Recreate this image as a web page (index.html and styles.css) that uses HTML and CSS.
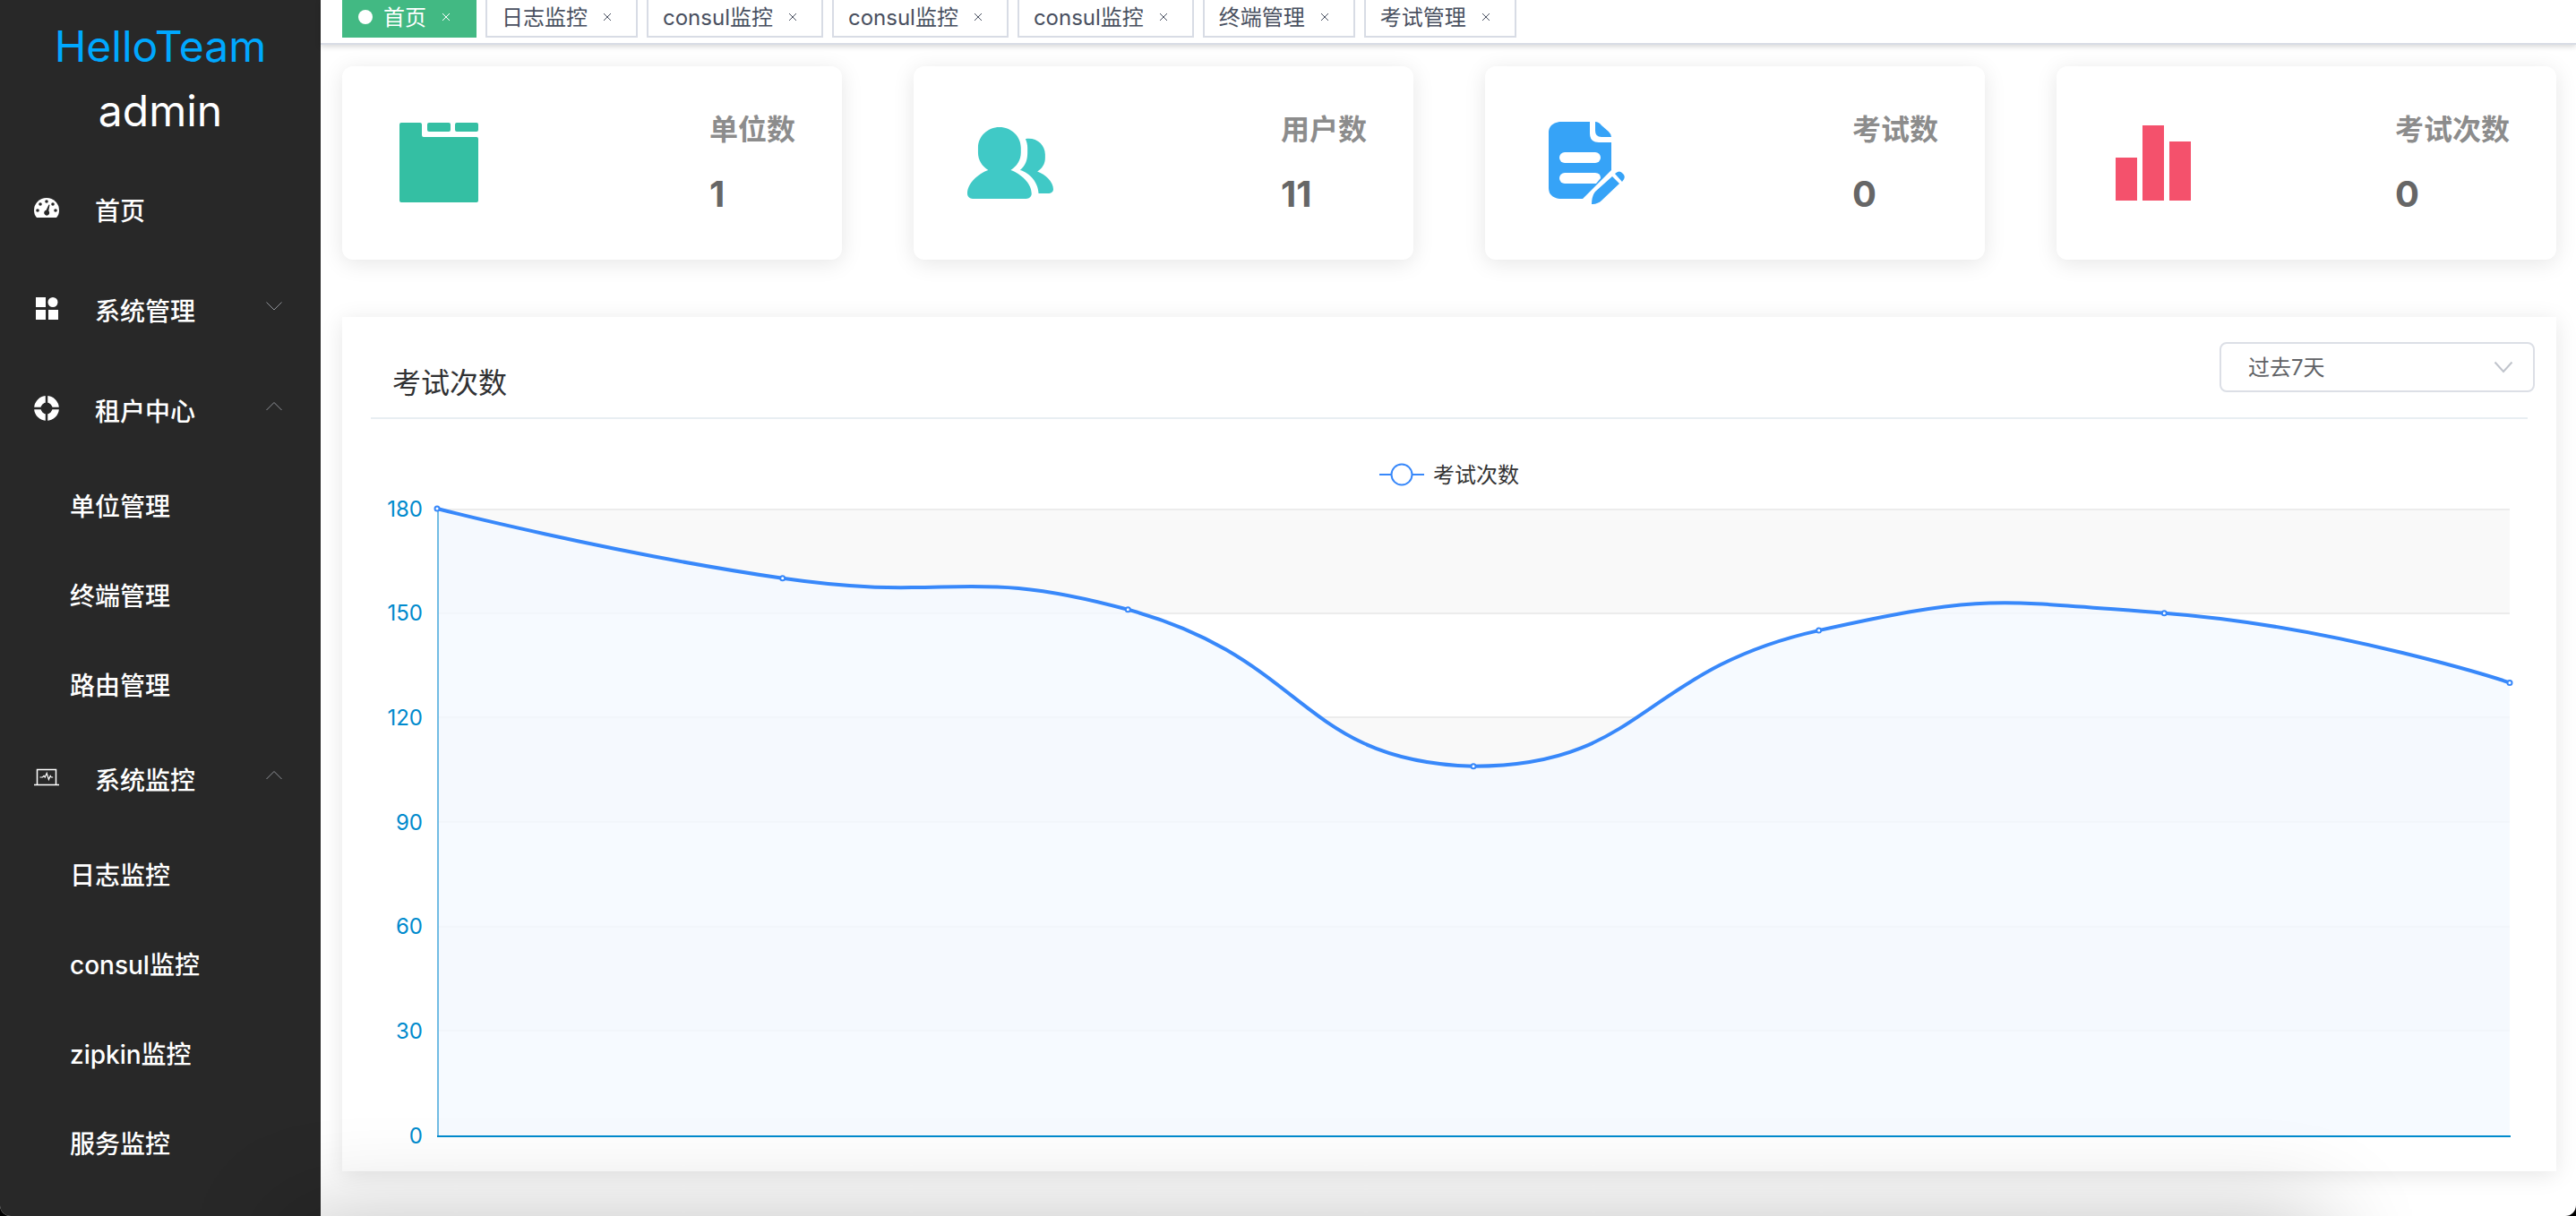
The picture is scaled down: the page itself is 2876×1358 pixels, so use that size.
FILE: index.html
```html
<!DOCTYPE html>
<html lang="zh-CN">
<head>
<meta charset="utf-8">
<meta name="viewport" content="width=device-width, initial-scale=1">
<title>HelloTeam</title>
<link rel="stylesheet" href="styles.css">
</head>
<body>
<div class="app">
  <aside class="sidebar">
    <div class="brand">
      <a class="brand-name" href="#">HelloTeam</a>
      <span class="brand-user">admin</span>
    </div>
    <nav class="menu">
      <a class="menu-item" href="#">
        <svg class="menu-icon" viewBox="0 0 28 28"><path fill="#fff" d="M3 25C1 23 0 20 0 17a14 14 0 0 1 28 0c0 3-1 6-3 8z"/><g fill="#282828"><circle cx="4" cy="17" r="1.8"/><circle cx="7" cy="10" r="1.8"/><circle cx="14" cy="7" r="1.8"/><circle cx="21" cy="10" r="1.8"/><circle cx="24" cy="17" r="1.8"/><path d="M16.500 10.500l1 .3-1.200 6.700a3 3 0 1 1-2.800-.8z"/></g></svg>
        <span>首页</span>
      </a>
      <button class="menu-item" type="button" aria-expanded="false">
        <svg class="menu-icon" viewBox="0 0 28 28"><g fill="#fff"><rect x="2" y="2" width="11" height="11"/><circle cx="21" cy="7.500" r="5.500"/><rect x="2" y="16" width="11" height="11"/><rect x="16" y="16" width="11" height="11"/></g></svg>
        <span>系统管理</span>
        <svg class="chevron" viewBox="0 0 20 12"><path d="M1.500 1.500l8.500 8.500 8.500-8.500"/></svg>
      </button>
      <button class="menu-item" type="button" aria-expanded="true">
        <svg class="menu-icon" viewBox="0 0 28 28"><circle cx="14" cy="14" r="10.200" fill="none" stroke="#fff" stroke-width="7.400"/><path d="M14 0v28M0 14h28" stroke="#282828" stroke-width="2.500"/></svg>
        <span>租户中心</span>
        <svg class="chevron" viewBox="0 0 20 12"><path d="M1.500 10l8.500-8.500 8.500 8.500"/></svg>
      </button>
      <a class="submenu-item" href="#">单位管理</a>
      <a class="submenu-item" href="#">终端管理</a>
      <a class="submenu-item" href="#">路由管理</a>
      <button class="menu-item" type="button" aria-expanded="true">
        <svg class="menu-icon" viewBox="0 0 28 28"><path fill="none" stroke="#fff" stroke-width="1.500" d="M3.500 22V5.500h21V22M0 22.500h28"/><path fill="none" stroke="#fff" stroke-width="1.200" d="M6.500 14h3l1.500-1.500 1.200 1.500 2-4.500 2.200 7 1.800-4 1 1.500h2"/></svg>
        <span>系统监控</span>
        <svg class="chevron" viewBox="0 0 20 12"><path d="M1.500 10l8.500-8.500 8.500 8.500"/></svg>
      </button>
      <a class="submenu-item" href="#">日志监控</a>
      <a class="submenu-item" href="#">consul监控</a>
      <a class="submenu-item" href="#">zipkin监控</a>
      <a class="submenu-item" href="#">服务监控</a>
    </nav>
  </aside>

  <div class="content">
    <div class="tabs">
      <div class="tab tab-active"><span class="tab-dot"></span><a href="#">首页</a><button class="tab-close" type="button" aria-label="关闭"><svg viewBox="0 0 10 10"><path d="M1 1l8 8M9 1L1 9"/></svg></button></div>
      <div class="tab"><a href="#">日志监控</a><button class="tab-close" type="button" aria-label="关闭"><svg viewBox="0 0 10 10"><path d="M1 1l8 8M9 1L1 9"/></svg></button></div>
      <div class="tab"><a href="#">consul监控</a><button class="tab-close" type="button" aria-label="关闭"><svg viewBox="0 0 10 10"><path d="M1 1l8 8M9 1L1 9"/></svg></button></div>
      <div class="tab"><a href="#">consul监控</a><button class="tab-close" type="button" aria-label="关闭"><svg viewBox="0 0 10 10"><path d="M1 1l8 8M9 1L1 9"/></svg></button></div>
      <div class="tab"><a href="#">consul监控</a><button class="tab-close" type="button" aria-label="关闭"><svg viewBox="0 0 10 10"><path d="M1 1l8 8M9 1L1 9"/></svg></button></div>
      <div class="tab"><a href="#">终端管理</a><button class="tab-close" type="button" aria-label="关闭"><svg viewBox="0 0 10 10"><path d="M1 1l8 8M9 1L1 9"/></svg></button></div>
      <div class="tab"><a href="#">考试管理</a><button class="tab-close" type="button" aria-label="关闭"><svg viewBox="0 0 10 10"><path d="M1 1l8 8M9 1L1 9"/></svg></button></div>
    </div>

    <main class="dashboard">
      <section class="stats">
        <div class="stat">
          <svg class="stat-icon" viewBox="0 0 96 96" fill="#34bfa3"><path d="M6 3h21q2 0 2 2v12q0 2 2 2h59q2 0 2 2v69q0 2-2 2H6q-2 0-2-2V5q0-2 2-2z"/><rect x="35" y="3" width="26" height="10" rx="2"/><rect x="66" y="3" width="26" height="10" rx="2"/></svg>
          <div class="stat-text"><span class="stat-label">单位数</span><span class="stat-value">1</span></div>
        </div>
        <div class="stat">
          <svg class="stat-icon" viewBox="0 0 96 96" fill="#40c9c6"><svg x="0" y="8" width="96" height="80" viewBox="0 0 128 128" preserveAspectRatio="none"><path d="M95.648 118.762c0 5.035-3.563 9.121-7.979 9.121H7.980c-4.416 0-7.979-4.086-7.979-9.121C0 100.519 15.408 83.470 31.152 76.750c-9.099-6.430-15.216-17.863-15.216-30.987v-9.128c0-20.160 14.293-36.518 31.893-36.518s31.894 16.358 31.894 36.518v9.122c0 13.137-6.123 24.556-15.216 30.993 15.738 6.726 31.141 23.769 31.141 42.012z"/><path d="M106.032 118.252h15.867c3.376 0 6.101-3.125 6.101-6.972 0-13.957-11.787-26.984-23.819-32.123 6.955-4.919 11.638-13.660 11.638-23.704v-6.985c0-15.416-10.928-27.926-24.390-27.926-1.674 0-3.306.193-4.890.561 1.936 4.713 3.018 9.974 3.018 15.526v9.121c0 13.137-3.056 23.111-11.066 30.993 14.842 4.410 27.312 23.420 27.541 41.509z"/></svg></svg>
          <div class="stat-text"><span class="stat-label">用户数</span><span class="stat-value">11</span></div>
        </div>
        <div class="stat">
          <svg class="stat-icon" viewBox="0 0 96 96" fill="#36a3f7"><path d="M23 2h34v13q0 10 10 10h14v31L49 88H23q-12-2-12-12V14Q11 4 23 2z"/><path d="M63 2q4 0 7 4l8 7q3 3 3 6H70q-7 0-7-7z"/><rect x="23" y="36" width="46" height="12" rx="6" fill="#fff"/><path fill="#fff" d="M29 59h34q6 0 6 6l-5 6H29a6 6 0 0 1 0-12z"/><path d="M59 94q0-9 4-14l19-17 8 8-20 19q-4 4-11 4z"/><path d="M85 60q5-5 9 0 4 4-1 9z"/></svg>
          <div class="stat-text"><span class="stat-label">考试数</span><span class="stat-value">0</span></div>
        </div>
        <div class="stat">
          <svg class="stat-icon" viewBox="0 0 96 96" fill="#f4516c"><rect x="6" y="42" width="24" height="48"/><rect x="36" y="6" width="24" height="84"/><rect x="66" y="24" width="24" height="66"/></svg>
          <div class="stat-text"><span class="stat-label">考试次数</span><span class="stat-value">0</span></div>
        </div>
      </section>

      <section class="panel">
        <header class="panel-header">
          <h2>考试次数</h2>
          <label class="range">
            <select aria-label="时间范围"><option>过去7天</option></select>
            <svg class="range-arrow" viewBox="0 0 22 14"><path d="M1.500 1.500L11 12l9.500-10.500"/></svg>
          </label>
        </header>
        <hr class="divider">
        <svg class="chart" viewBox="0 0 2472 840" role="img" aria-label="考试次数">
          <g fill="#f9f9f9"><rect x="106" y="100" width="2314" height="117"/><rect x="106" y="333" width="2314" height="117"/><rect x="106" y="567" width="2314" height="116"/></g>
          <g fill="#ececec"><rect x="106" y="100" width="2314" height="2"/><rect x="106" y="216" width="2314" height="2"/><rect x="106" y="332" width="2314" height="2"/><rect x="106" y="449" width="2314" height="2"/><rect x="106" y="566" width="2314" height="2"/><rect x="106" y="682" width="2314" height="2"/></g>
          <path class="area" d="M106 100C106 100 297.400 149.400 491.700 177.800C683 205.800 693.100 162.600 877.300 212.800C1078.700 267.600 1068.100 381.900 1263 387.800C1453.700 387.800 1449.100 280.400 1648.700 236.100C1834.700 194.800 1843.200 202.300 2034.300 216.700C2228.900 231.400 2420 294.400 2420 294.400V800H106z"/>
          <rect x="106" y="100" width="2" height="700" fill="#72bce4"/>
          <rect x="106" y="800" width="2315" height="2" fill="#008acd"/>
          <path class="line" d="M106 100C106 100 297.400 149.400 491.700 177.800C683 205.800 693.100 162.600 877.300 212.800C1078.700 267.600 1068.100 381.900 1263 387.800C1453.700 387.800 1449.100 280.400 1648.700 236.100C1834.700 194.800 1843.200 202.300 2034.300 216.700C2228.900 231.400 2420 294.400 2420 294.400"/>
          <g class="points"><circle cx="106" cy="100" r="2.500"/><circle cx="491.700" cy="177.800" r="2.500"/><circle cx="877.300" cy="212.800" r="2.500"/><circle cx="1263" cy="387.800" r="2.500"/><circle cx="1648.700" cy="236.100" r="2.500"/><circle cx="2034.300" cy="216.700" r="2.500"/><circle cx="2420" cy="294.400" r="2.500"/></g>
          <g class="axis-labels"><text x="90" y="109">180</text><text x="90" y="225">150</text><text x="90" y="342">120</text><text x="90" y="459">90</text><text x="90" y="575">60</text><text x="90" y="692">30</text><text x="90" y="809">0</text></g>
          <g class="legend"><path d="M1158 62h50"/><circle cx="1183" cy="62" r="11.500"/><text x="1218" y="71">考试次数</text></g>
        </svg>
      </section>
    </main>
  </div>
</div>
</body>
</html>
```

FILE: styles.css
```css
* {
  box-sizing: border-box;
}

html {
  background: #000;
}

body {
  margin: 0;
  font-family: Inter, "Noto Sans CJK SC", sans-serif;
  font-size: 24px;
}

a {
  color: inherit;
  text-decoration: none;
}

button,
select {
  margin: 0;
  padding: 0;
  border: 0;
  background: none;
  color: inherit;
  font: inherit;
}

.app {
  position: relative;
  display: flex;
  min-height: 100vh;
  overflow: hidden;
  background: #fff;
  border-radius: 0 0 12px 12px;
}

/* soft shade rising from the lower window edge */
.app::after {
  content: "";
  position: absolute;
  left: 320px;
  right: 280px;
  top: 100%;
  height: 160px;
  box-shadow: 0 0 110px rgba(0, 0, 0, 0.24);
  pointer-events: none;
}

/* sidebar */
.sidebar {
  flex: 0 0 358px;
  background: #282828;
  color: #fff;
}

.brand {
  display: flex;
  flex-direction: column;
  align-items: center;
  height: 179px;
  padding-top: 16px;
  font-size: 48px;
  line-height: 72px;
}

.brand-name {
  color: #00a8ff;
}

.menu {
  display: flex;
  flex-direction: column;
  font-size: 28px;
}

.menu-item {
  display: flex;
  align-items: center;
  gap: 40px;
  height: 112px;
  padding: 0 42px 2px 38px;
  text-align: left;
}

.menu-item span,
.submenu-item {
  font-weight: 500;
}

.menu-icon {
  width: 28px;
  height: 28px;
  margin-bottom: 4px;
}

.chevron {
  width: 20px;
  height: 12px;
  margin: 0 0 8px auto;
  fill: none;
  stroke: #909399;
  stroke-width: 1;
}

.submenu-item {
  display: flex;
  align-items: center;
  height: 100px;
  padding: 0 0 2px 78px;
}

/* tab bar */
.content {
  flex: 1;
  min-width: 0;
}

.tabs {
  display: flex;
  gap: 10px;
  height: 50px;
  padding-left: 24px;
  border-bottom: 2px solid #d8dce5;
  box-shadow: 0 2px 6px rgba(0, 0, 0, 0.16);
}

.tab {
  display: flex;
  align-items: center;
  height: 42px;
  padding: 0 16px 2px;
  border: 2px solid #d8dce5;
  border-top: 0;
  color: #495060;
  white-space: nowrap;
}

.tab a {
  padding-bottom: 4px;
}

.tab-active {
  background: #42b983;
  border-color: #42b983;
  color: #fff;
}

.tab-dot {
  width: 16px;
  height: 16px;
  margin-right: 12px;
  border-radius: 50%;
  background: #fff;
}

.tab-close {
  display: flex;
  justify-content: center;
  width: 32px;
  margin-left: 6px;
}

.tab-close svg {
  width: 10px;
  height: 10px;
  fill: none;
  stroke: currentColor;
}

/* stat cards */
.dashboard {
  padding: 24px 22px 40px 24px;
}

.stats {
  display: grid;
  grid-template-columns: repeat(4, 1fr);
  gap: 80px;
}

.stat {
  display: flex;
  align-items: center;
  justify-content: space-between;
  height: 216px;
  padding: 0 52px 0 60px;
  border-radius: 12px;
  background: #fff;
  box-shadow: 0 4px 24px rgba(0, 0, 0, 0.1);
}

.stat-icon {
  width: 96px;
  height: 96px;
}

.stat-text {
  display: flex;
  flex-direction: column;
  gap: 24px;
  padding-bottom: 2px;
  font-weight: 700;
  line-height: 48px;
}

.stat-label {
  color: #8c8c8c;
  font-size: 32px;
}

.stat-value {
  color: #666;
  font-size: 40px;
}

/* chart panel */
.panel {
  margin-top: 64px;
  background: #fff;
  box-shadow: 0 4px 24px rgba(0, 0, 0, 0.1);
}

.panel-header {
  display: flex;
  align-items: flex-start;
  justify-content: space-between;
  padding: 28px 24px 18px 56px;
}

.panel-header h2 {
  margin: 26px 0 0;
  color: #303133;
  font-size: 32px;
  font-weight: 400;
  line-height: 40px;
}

.range {
  position: relative;
  width: 352px;
}

.range select {
  width: 100%;
  height: 56px;
  padding-left: 30px;
  border: 2px solid #dcdfe6;
  border-radius: 8px;
  background: #fff;
  color: #606266;
  appearance: none;
}

.range-arrow {
  position: absolute;
  top: 21px;
  right: 24px;
  width: 22px;
  height: 14px;
  fill: none;
  stroke: #c0c4cc;
  stroke-width: 2;
  pointer-events: none;
}

.divider {
  height: 2px;
  margin: 0 32px;
  border: 0;
  background: #e8eef2;
}

.chart {
  display: block;
  width: 100%;
  height: auto;
  font-size: 24px;
}

.area {
  fill: #f4f9ff;
  fill-opacity: 0.8;
}

.line {
  fill: none;
  stroke: #3888fa;
  stroke-width: 4;
  stroke-linejoin: bevel;
}

.points {
  fill: #fff;
  stroke: #3888fa;
  stroke-width: 2;
}

.axis-labels {
  fill: #008acd;
  text-anchor: end;
}

.legend {
  fill: #fff;
  stroke: #3888fa;
  stroke-width: 2;
}

.legend text {
  fill: #333;
  stroke: none;
}
```
